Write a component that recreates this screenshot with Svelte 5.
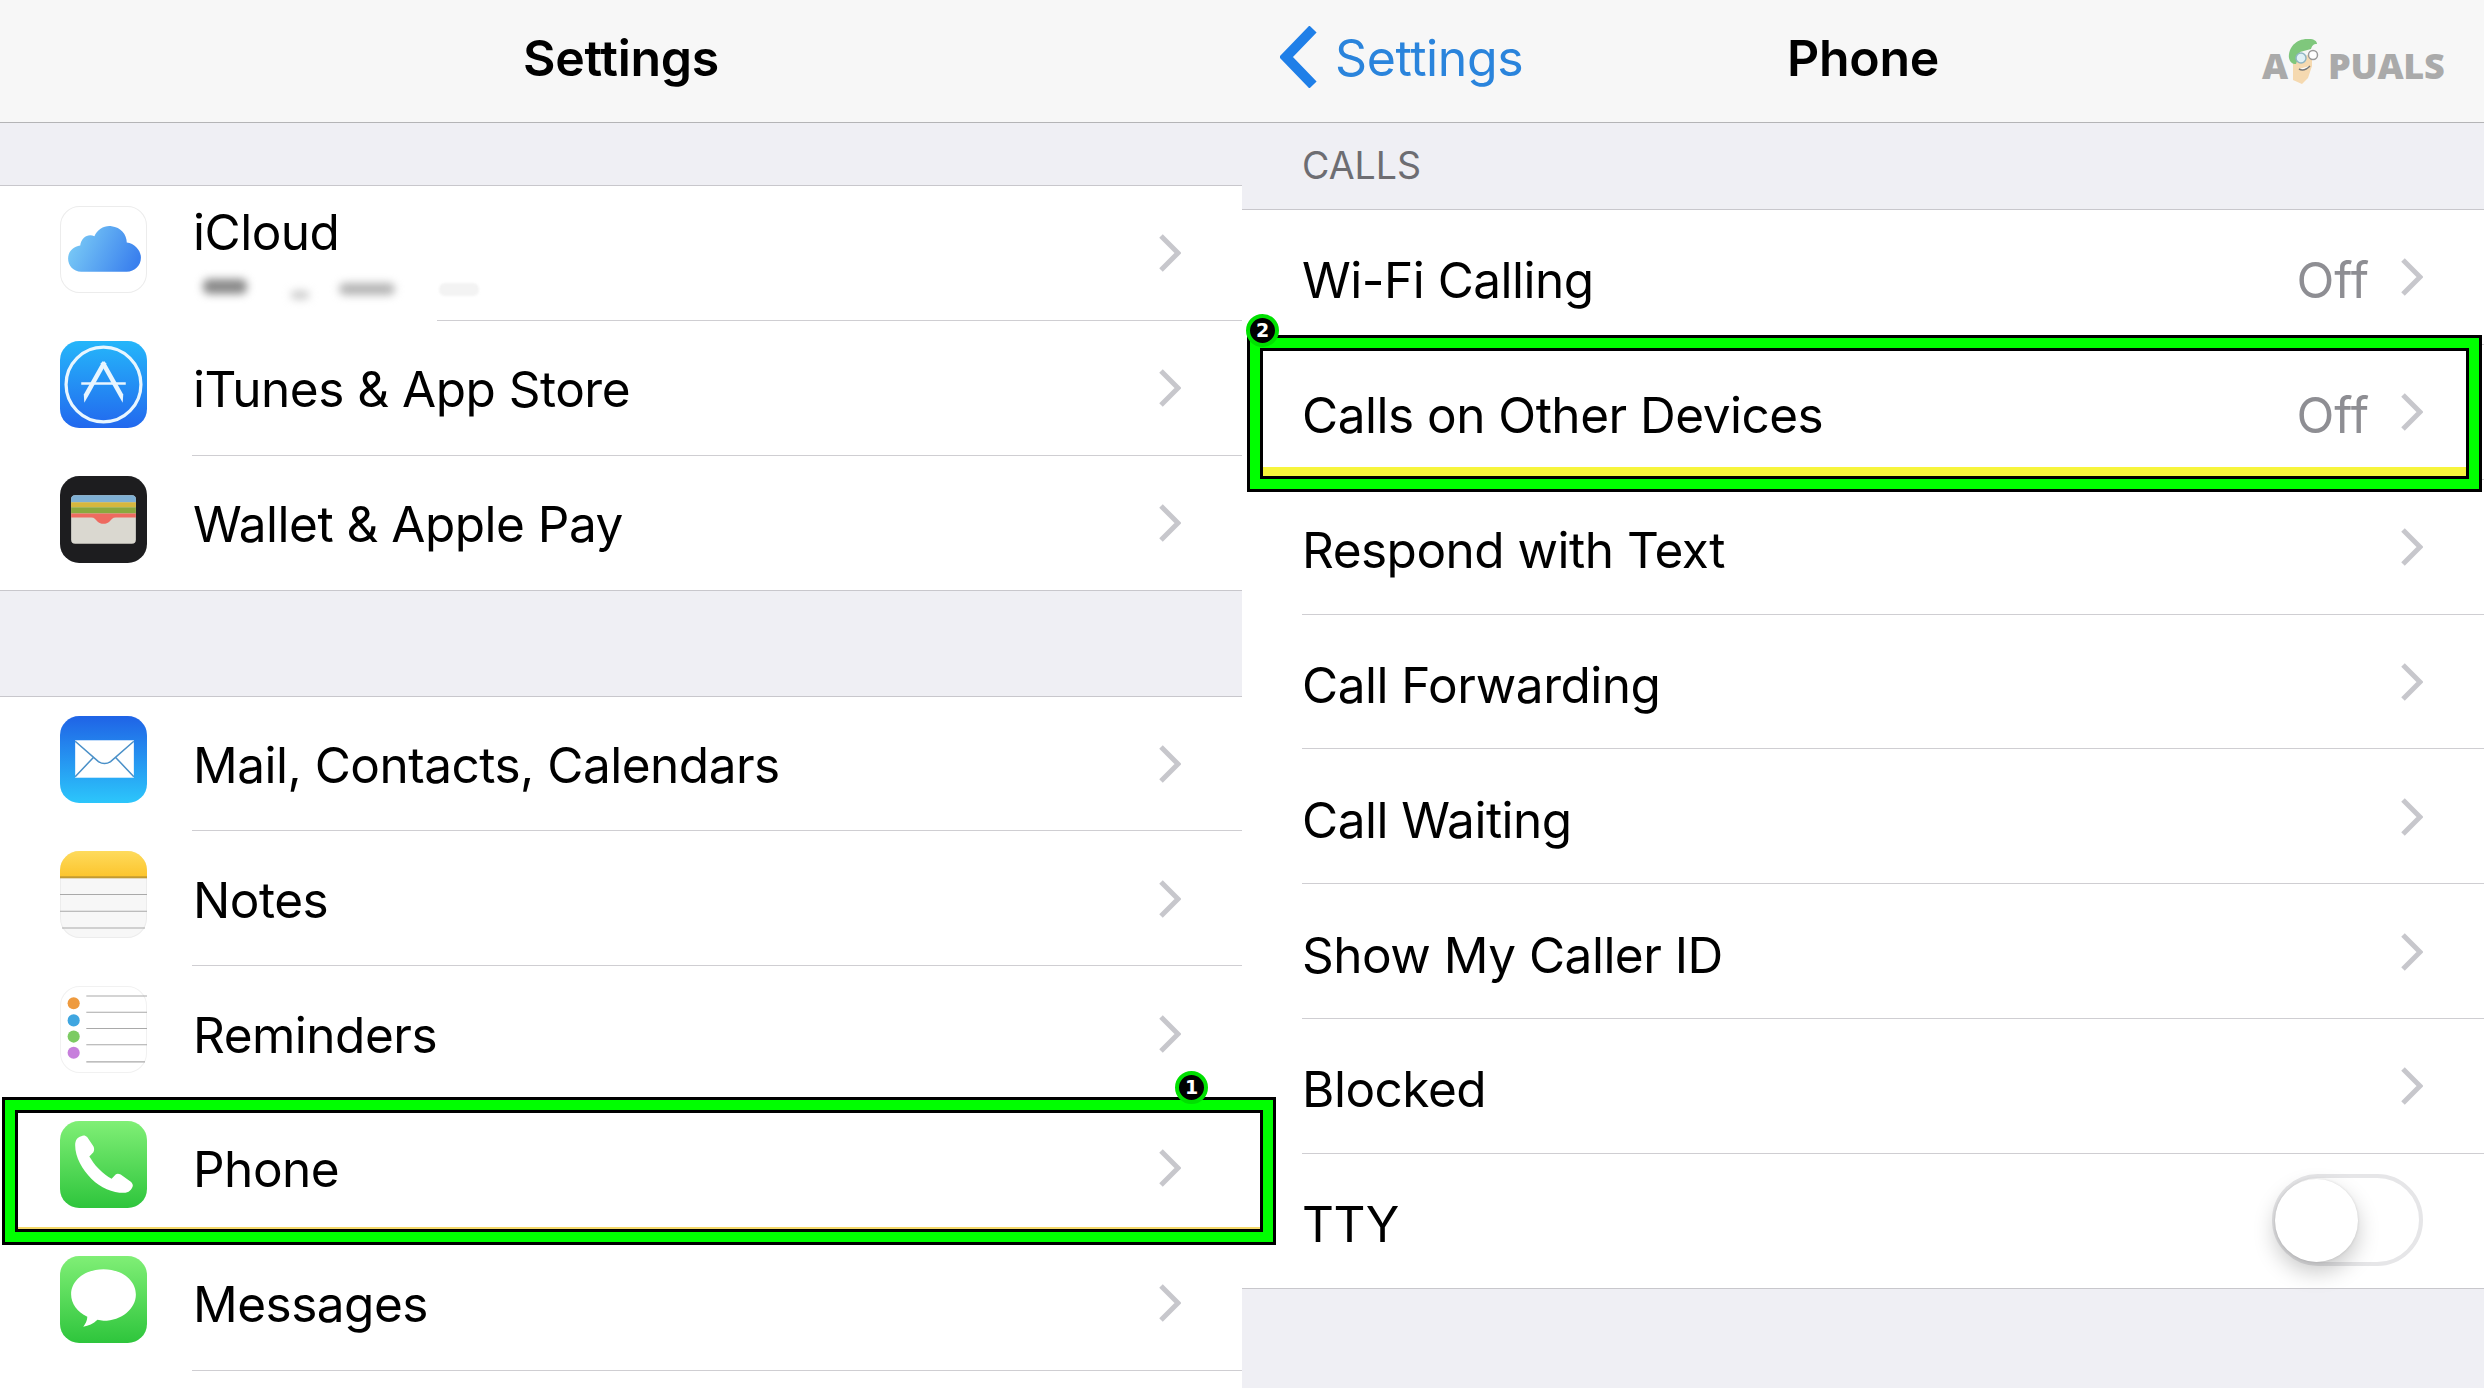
<script>
  const group1 = [
    { icon: 'icloud', label: 'iCloud', sub: true },
    { icon: 'store', label: 'iTunes & App Store' },
    { icon: 'wallet', label: 'Wallet & Apple Pay' }
  ];
  const group2 = [
    { icon: 'mail', label: 'Mail, Contacts, Calendars' },
    { icon: 'notes', label: 'Notes' },
    { icon: 'reminders', label: 'Reminders' },
    { icon: 'phone', label: 'Phone', mark: 1 },
    { icon: 'messages', label: 'Messages' }
  ];
  const calls = [
    { label: 'Wi-Fi Calling', value: 'Off' },
    { label: 'Calls on Other Devices', value: 'Off', mark: 2 },
    { label: 'Respond with Text' },
    { label: 'Call Forwarding' },
    { label: 'Call Waiting' },
    { label: 'Show My Caller ID' },
    { label: 'Blocked' }
  ];
</script>

{#snippet chevron()}
  <svg class="chev" viewBox="0 0 23 38" aria-hidden="true"><path d="M3 2 L20 19 L3 36" fill="none" stroke="#c7c7cc" stroke-width="5"/></svg>
{/snippet}

{#snippet appIcon(name)}
  <svg class="icon" viewBox="0 0 86 86" aria-hidden="true">
    <defs>
      {#if name === 'icloud'}
        <linearGradient id="g-icloud" x1="0" y1="0.3" x2="1" y2="0.6"><stop offset="0" stop-color="#7ccdf6"/><stop offset="1" stop-color="#3a80ee"/></linearGradient>
      {:else}
        <linearGradient id="g-{name}" x1="0" y1="0" x2="0" y2="1">
          {#if name === 'store'}<stop offset="0" stop-color="#25b6fa"/><stop offset="1" stop-color="#2268ee"/>
          {:else if name === 'mail'}<stop offset="0" stop-color="#1f63e6"/><stop offset="1" stop-color="#2cc6fb"/>
          {:else if name === 'notes'}<stop offset="0" stop-color="#fedb5c"/><stop offset="1" stop-color="#fcc42c"/>
          {:else}<stop offset="0" stop-color="#80ef76"/><stop offset="1" stop-color="#2ec53c"/>{/if}
        </linearGradient>
      {/if}
    </defs>
    {#if name === 'icloud'}
      <rect x=".5" y=".5" width="85" height="85" rx="19" fill="#fff" stroke="#ececec"/>
      <path d="M21 65 C13 65 8 59 8 52 C8 45 13 40 20 39 C21 31 28 27 34 30 C37 23 44 19 51 20 C60 21 66 28 66 36 C74 37 80 44 80 51 C80 59 74 65 66 65 Z" fill="url(#g-icloud)"/>
    {:else if name === 'store'}
      <rect width="86" height="86" rx="19" fill="url(#g-store)"/>
      <circle cx="43" cy="43" r="37" fill="none" stroke="#e8f6ff" stroke-width="3.2"/>
      <path d="M21 42 H65" fill="none" stroke="#e8f6ff" stroke-width="2.6"/>
      <path d="M42 20 L46 22 L28 54 L24 61 L23.500 53 Z" fill="#e8f6ff"/>
      <path d="M44 20 L40 22 L58 54 L62 61 L62.500 53 Z" fill="#e8f6ff"/>
    {:else if name === 'wallet'}
      <rect width="86" height="86" rx="19" fill="#1d1d1f"/>
      <rect x="11" y="19" width="64" height="48" rx="4" fill="#dad8d0"/>
      <path d="M11 23 a4 4 0 0 1 4 -4 H71 a4 4 0 0 1 4 4 V26 H11 Z" fill="#7fb0d4"/>
      <rect x="11" y="26" width="64" height="5" fill="#d6b73e"/>
      <rect x="11" y="31" width="64" height="6" fill="#8aa83e"/>
      <path d="M11 37 H75 V41 H55 C52 41 51 43 49 45 C46 48 40 48 37 45 C35 43 34 41 31 41 H11 Z" fill="#ee6a60"/>
    {:else if name === 'mail'}
      <rect width="86" height="86" rx="19" fill="url(#g-mail)"/>
      <rect x="15" y="24" width="58" height="37" fill="#fff"/>
      <path d="M15 25 L38 45 Q44 49 50 45 L73 25 M15 60 L33 41 M73 60 L55 41" fill="none" stroke="#4a90c8" stroke-width="1.5"/>
    {:else if name === 'notes'}
      <rect x=".5" y=".5" width="85" height="85" rx="19" fill="#f7f7f7" stroke="#ececec"/>
      <path d="M0 26 V19 A19 19 0 0 1 19 0 H67 A19 19 0 0 1 86 19 V26 Z" fill="url(#g-notes)"/>
      <rect y="25" width="86" height="2" fill="#c29a32"/>
      <path d="M0 43 H86 M0 59.5 H86 M2 76 H84" stroke="#a9a9a9" stroke-width="1"/>
    {:else if name === 'reminders'}
      <rect x=".5" y=".5" width="85" height="85" rx="19" fill="#fff" stroke="#f1f1f1"/>
      <path d="M26 10 H86 M26 26 H86 M26 42 H86 M26 58 H86 M26 75 H84" stroke="#a9a9a9" stroke-width="1"/>
      <circle cx="13.500" cy="17" r="6" fill="#ee9a3e"/>
      <circle cx="13.500" cy="34" r="6" fill="#3fa6e0"/>
      <circle cx="13.500" cy="50" r="6" fill="#7ccb63"/>
      <circle cx="13.500" cy="66" r="6" fill="#c77fdc"/>
    {:else if name === 'phone'}
      <rect width="86" height="86" rx="19" fill="url(#g-phone)"/>
      <path d="M21 15 C17 16 15 19 15 24 C15 36 22 48 31 57 C40 66 52 71 63 71 C68 71 71 68 72 64 C72 62 71 61 70 60 L60 53 C58 52 56 52 55 53 L51 57 C47 55 43 52 38 47 C34 43 31 38 29 35 L33 31 C34 29 34 27 33 25 L27 16 C25 14 23 14 21 15 Z" fill="#fff"/>
    {:else}
      <rect width="86" height="86" rx="19" fill="url(#g-messages)"/>
      <path d="M43 13 C25 13 11 24 11 38 C11 47 17 55 27 60 C27 64 25 67 23 70 C28 69 33 67 37 63 C39 63 41 64 43 64 C61 64 75 52 75 38 C75 24 61 13 43 13 Z" fill="#fff"/>
    {/if}
  </svg>
{/snippet}

{#snippet badge(n)}
  <span class="badge">{n}</span>
{/snippet}

{#snippet settingsRow(row)}
  <div class="row settings" class:first={row.sub}>
    {@render appIcon(row.icon)}
    {#if row.sub}
      <div class="stack">
        <span class="label">{row.label}</span>
        <span class="sub" aria-hidden="true"><i class="b1"></i><i class="b2"></i><i class="b3"></i><i class="b4"></i></span>
      </div>
    {:else}
      <span class="label">{row.label}</span>
    {/if}
    {@render chevron()}
    {#if row.mark}
      <div class="mark mark-left">{@render badge(row.mark)}</div>
    {/if}
  </div>
{/snippet}

<div class="page">
  <section class="panel left">
    <header class="nav"><h1>Settings</h1></header>
    <div class="gap-a"></div>
    <div class="group">
      {#each group1 as row}{@render settingsRow(row)}{/each}
    </div>
    <div class="gap-b"></div>
    <div class="group">
      {#each group2 as row}{@render settingsRow(row)}{/each}
      <div class="filler"></div>
    </div>
  </section>

  <section class="panel right">
    <header class="nav">
      <div class="back">
        <svg viewBox="0 0 37 62" aria-hidden="true"><path d="M33 3 L6 31 L33 59" fill="none" stroke="#1f7fe8" stroke-width="10"/></svg>
        <span>Settings</span>
      </div>
      <h1>Phone</h1>
      <div class="logo">
        <span class="lg-a">A</span><span class="lg-rest">PUALS</span>
        <svg viewBox="0 0 34 46" aria-hidden="true">
          <path d="M7 21 L7 42 L16 46 L22 40 L26 28 L26 16 Z" fill="#f5d9b0"/>
          <path d="M3 20 C2 9 11 0 23 1 C28 1 31 3 31 6 C27 6 26 8 25 11 L14 14 L10 26 C6 26 4 24 3 20 Z" fill="#7fc77c"/>
          <circle cx="15" cy="20" r="5" fill="#dff0f6" stroke="#8fb5c2" stroke-width="1.500"/>
          <circle cx="27" cy="17" r="4.500" fill="#fff" stroke="#9a9a9a" stroke-width="1.500"/>
          <path d="M13 31 Q18 34 24 28" fill="#fff" stroke="#777" stroke-width="1.500"/>
        </svg>
      </div>
    </header>
    <div class="section-head">CALLS</div>
    <div class="group">
      {#each calls as row}
        <div class="row plain">
          <span class="label">{row.label}</span>
          {#if row.value}<span class="value">{row.value}</span>{/if}
          {@render chevron()}
          {#if row.mark}
            <div class="mark mark-right"><i class="yellow"></i>{@render badge(row.mark)}</div>
          {/if}
        </div>
      {/each}
      <div class="row plain">
        <span class="label">TTY</span>
        <span class="toggle"><i></i></span>
      </div>
    </div>
  </section>
</div>

<style>
  :global(body) { margin: 0; }
  .page {
    display: flex;
    width: 2484px;
    height: 1388px;
    overflow: hidden;
    background: #efeff4;
    font-family: Inter, "Liberation Sans", sans-serif;
    color: #000;
  }
  .panel { width: 1242px; flex: none; position: relative; }
  .left { z-index: 2; }
  .nav {
    position: relative;
    height: 122px;
    border-bottom: 1px solid #b4b4b6;
    background: #f7f7f7;
    display: flex;
    align-items: center;
    justify-content: center;
  }
  h1 {
    margin: 0;
    font-size: 50px;
    font-weight: 600;
    letter-spacing: -0.3px;
    line-height: 1;
    padding-bottom: 6px;
  }
  .gap-a { height: 62px; border-bottom: 1px solid #c8c7cc; }
  .gap-b { height: 105px; border-bottom: 1px solid #c8c7cc; }
  .group { background: #fff; }
  .filler { height: 18px; }
  .row {
    position: relative;
    box-sizing: border-box;
    height: 134.85px;
    display: flex;
    align-items: center;
    padding-right: 61px;
  }
  .row::after {
    content: "";
    position: absolute;
    left: 192px;
    right: 0;
    bottom: 0;
    height: 1px;
    background: #cfced2;
  }
  .row.plain::after { left: 60px; }
  .row.plain { padding-left: 60px; }
  .row.first::after { left: 437px; }
  .group > .row:last-child::after { left: 0; background: #c8c7cc; }
  .settings { padding-left: 60px; }
  .icon { width: 87px; height: 87px; flex: none; margin: -8px 46px 0 0; }
  .label {
    font-size: 49.5px;
    line-height: 60px;
    letter-spacing: -0.5px;
    padding-top: 2px;
    white-space: nowrap;
  }
  .plain .label, .value { padding-top: 6px; }
  .stack { display: flex; flex-direction: column; margin-top: -20px; }
  .stack .label { line-height: 60px; margin-top: -24px; }
  .sub { position: relative; height: 0; }
  .sub i { position: absolute; display: block; filter: blur(4px); border-radius: 6px; }
  .sub .b1 { left: 10px; top: 17px; width: 44px; height: 15px; background: #8a8a8a; }
  .sub .b2 { left: 98px; top: 29px; width: 18px; height: 8px; background: #c8c8c8; }
  .sub .b3 { left: 146px; top: 21px; width: 56px; height: 12px; background: #b4b4b4; }
  .sub .b4 { left: 246px; top: 21px; width: 40px; height: 13px; background: #f3f3f3; filter: blur(1px); }
  .chev { width: 23px; height: 38px; flex: none; margin-left: auto; }
  .value { margin-left: auto; margin-right: 31px; font-size: 49.5px; color: #8e8e93; }
  .value + .chev { margin-left: 0; }

  .mark {
    position: absolute;
    box-sizing: border-box;
    border: 3px solid #000;
    z-index: 3;
    pointer-events: none;
  }
  .mark::before {
    content: "";
    position: absolute;
    inset: 0;
    border: 10px solid #00ff00;
    box-shadow: inset 0 0 0 3px #000;
  }
  .mark-left { left: 2px; right: -34px; top: -4.500px; bottom: -8.600px; }
  .mark-right { left: 5px; right: 2px; top: -10px; bottom: -12px; }
  .yellow { position: absolute; left: 13px; right: 13px; bottom: 13px; height: 9px; background: #f7f53c; }
  .mark-left::after {
    content: "";
    position: absolute;
    left: 13px; right: 13px; bottom: 13px; height: 2px;
    background: #f5d96a;
  }
  .badge {
    position: absolute;
    box-sizing: border-box;
    width: 33px;
    height: 33px;
    border-radius: 50%;
    background: #000;
    border: 4px solid #00e000;
    color: #fff;
    font: 700 19px/25px "DejaVu Sans", sans-serif;
    text-align: center;
    z-index: 1;
  }
  .mark-left .badge { right: 65px; top: -29px; }
  .mark-right .badge { left: -4px; top: -24px; }

  .back {
    position: absolute;
    left: 38px;
    top: 0;
    height: 122px;
    display: flex;
    align-items: center;
    gap: 18px;
    color: #2a84dc;
    font-size: 50px;
    letter-spacing: -0.4px;
  }
  .back svg { width: 37px; height: 62px; margin-top: -9px; }
  .back span { padding-bottom: 6px; }
  .logo {
    position: absolute;
    left: 1020px;
    top: 38px;
    width: 190px;
    height: 46px;
    color: #aaa;
    font-family: "Open Sans", sans-serif;
    font-weight: 800;
    font-size: 36px;
    line-height: 1;
    display: flex;
    align-items: flex-end;
  }
  .lg-a { width: 66px; line-height: 37px; }
  .lg-rest { letter-spacing: -0.3px; line-height: 37px; }
  .logo svg { position: absolute; left: 24px; top: 0; width: 34px; height: 46px; }
  .section-head {
    box-sizing: border-box;
    height: 87px;
    padding: 21px 0 0 60px;
    font-size: 37.5px;
    line-height: 44px;
    color: #6d6d72;
    border-bottom: 1px solid #c8c7cc;
  }
  .toggle {
    position: relative;
    box-sizing: border-box;
    margin-left: auto;
    margin-right: 0;
    margin-top: -2px;
    width: 151px;
    height: 92px;
    border: 4px solid #e6e6e8;
    border-radius: 46px;
    background: #fff;
  }
  .toggle i {
    position: absolute;
    left: -1px;
    top: 1px;
    width: 83px;
    height: 83px;
    border-radius: 50%;
    background: #fff;
    box-shadow: 0 10px 22px rgba(0,0,0,.22), 0 0 3px rgba(0,0,0,.12);
  }
</style>
